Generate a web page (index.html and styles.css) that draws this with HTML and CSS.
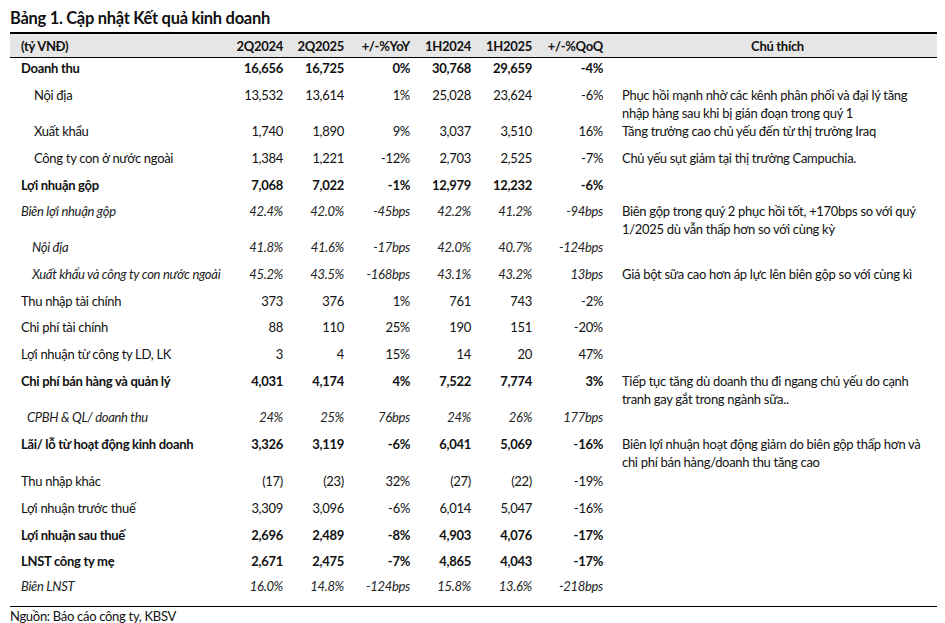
FILE: index.html
```html
<!DOCTYPE html>
<html lang="vi">
<head>
<meta charset="utf-8">
<title>Bảng 1. Cập nhật Kết quả kinh doanh</title>
<link rel="stylesheet" href="styles.css">
</head>
<body>
<div class="page">
  <h1 class="title">Bảng 1. Cập nhật Kết quả kinh doanh</h1>
  <div class="table">
    <div class="row head">
      <div class="c lbl">(tỷ VNĐ)</div>
      <div class="c n">2Q2024</div>
      <div class="c n">2Q2025</div>
      <div class="c n">+/-%YoY</div>
      <div class="c n">1H2024</div>
      <div class="c n">1H2025</div>
      <div class="c n">+/-%QoQ</div>
      <div class="c note center">Chú thích</div>
    </div>

    <div class="row h27 bold">
      <div class="c lbl">Doanh thu</div>
      <div class="c n">16,656</div><div class="c n">16,725</div><div class="c n">0%</div>
      <div class="c n">30,768</div><div class="c n">29,659</div><div class="c n">-4%</div>
      <div class="c note"></div>
    </div>
    <div class="row h36">
      <div class="c lbl ind">Nội địa</div>
      <div class="c n">13,532</div><div class="c n">13,614</div><div class="c n">1%</div>
      <div class="c n">25,028</div><div class="c n">23,624</div><div class="c n">-6%</div>
      <div class="c note">Phục hồi mạnh nhờ các kênh phân phối và đại lý tăng nhập hàng sau khi bị gián đoạn trong quý 1</div>
    </div>
    <div class="row h27">
      <div class="c lbl ind">Xuất khẩu</div>
      <div class="c n">1,740</div><div class="c n">1,890</div><div class="c n">9%</div>
      <div class="c n">3,037</div><div class="c n">3,510</div><div class="c n">16%</div>
      <div class="c note">Tăng trưởng cao chủ yếu đến từ thị trường Iraq</div>
    </div>
    <div class="row h27">
      <div class="c lbl ind">Công ty con ở nước ngoài</div>
      <div class="c n">1,384</div><div class="c n">1,221</div><div class="c n">-12%</div>
      <div class="c n">2,703</div><div class="c n">2,525</div><div class="c n">-7%</div>
      <div class="c note">Chủ yếu sụt giảm tại thị trường Campuchia.</div>
    </div>
    <div class="row h26 bold">
      <div class="c lbl">Lợi nhuận gộp</div>
      <div class="c n">7,068</div><div class="c n">7,022</div><div class="c n">-1%</div>
      <div class="c n">12,979</div><div class="c n">12,232</div><div class="c n">-6%</div>
      <div class="c note"></div>
    </div>
    <div class="row h36 ital">
      <div class="c lbl">Biên lợi nhuận gộp</div>
      <div class="c n">42.4%</div><div class="c n">42.0%</div><div class="c n">-45bps</div>
      <div class="c n">42.2%</div><div class="c n">41.2%</div><div class="c n">-94bps</div>
      <div class="c note">Biên gộp trong quý 2 phục hồi tốt, +170bps so với quý 1/2025 dù vẫn thấp hơn so với cùng kỳ</div>
    </div>
    <div class="row h27 ital">
      <div class="c lbl ind-i">Nội địa</div>
      <div class="c n">41.8%</div><div class="c n">41.6%</div><div class="c n">-17bps</div>
      <div class="c n">42.0%</div><div class="c n">40.7%</div><div class="c n">-124bps</div>
      <div class="c note"></div>
    </div>
    <div class="row h27 ital">
      <div class="c lbl ind-i">Xuất khẩu và công ty con nước ngoài</div>
      <div class="c n">45.2%</div><div class="c n">43.5%</div><div class="c n">-168bps</div>
      <div class="c n">43.1%</div><div class="c n">43.2%</div><div class="c n">13bps</div>
      <div class="c note">Giá bột sữa cao hơn áp lực lên biên gộp so với cùng kì</div>
    </div>
    <div class="row h26">
      <div class="c lbl">Thu nhập tài chính</div>
      <div class="c n">373</div><div class="c n">376</div><div class="c n">1%</div>
      <div class="c n">761</div><div class="c n">743</div><div class="c n">-2%</div>
      <div class="c note"></div>
    </div>
    <div class="row h27">
      <div class="c lbl">Chi phí tài chính</div>
      <div class="c n">88</div><div class="c n">110</div><div class="c n">25%</div>
      <div class="c n">190</div><div class="c n">151</div><div class="c n">-20%</div>
      <div class="c note"></div>
    </div>
    <div class="row h27">
      <div class="c lbl">Lợi nhuận từ công ty LD, LK</div>
      <div class="c n">3</div><div class="c n">4</div><div class="c n">15%</div>
      <div class="c n">14</div><div class="c n">20</div><div class="c n">47%</div>
      <div class="c note"></div>
    </div>
    <div class="row h36 bold">
      <div class="c lbl">Chi phí bán hàng và quản lý</div>
      <div class="c n">4,031</div><div class="c n">4,174</div><div class="c n">4%</div>
      <div class="c n">7,522</div><div class="c n">7,774</div><div class="c n">3%</div>
      <div class="c note">Tiếp tục tăng dù doanh thu đi ngang chủ yếu do cạnh tranh gay gắt trong ngành sữa..</div>
    </div>
    <div class="row h27 ital">
      <div class="c lbl ind-s">CPBH &amp; QL/ doanh thu</div>
      <div class="c n">24%</div><div class="c n">25%</div><div class="c n">76bps</div>
      <div class="c n">24%</div><div class="c n">26%</div><div class="c n">177bps</div>
      <div class="c note"></div>
    </div>
    <div class="row h37 bold">
      <div class="c lbl">Lãi/ lỗ từ hoạt động kinh doanh</div>
      <div class="c n">3,326</div><div class="c n">3,119</div><div class="c n">-6%</div>
      <div class="c n">6,041</div><div class="c n">5,069</div><div class="c n">-16%</div>
      <div class="c note">Biên lợi nhuận hoạt động giảm do biên gộp thấp hơn và chi phí bán hàng/doanh thu tăng cao</div>
    </div>
    <div class="row h27">
      <div class="c lbl">Thu nhập khác</div>
      <div class="c n">(17)</div><div class="c n">(23)</div><div class="c n">32%</div>
      <div class="c n">(27)</div><div class="c n">(22)</div><div class="c n">-19%</div>
      <div class="c note"></div>
    </div>
    <div class="row h27">
      <div class="c lbl">Lợi nhuận trước thuế</div>
      <div class="c n">3,309</div><div class="c n">3,096</div><div class="c n">-6%</div>
      <div class="c n">6,014</div><div class="c n">5,047</div><div class="c n">-16%</div>
      <div class="c note"></div>
    </div>
    <div class="row h26 bold">
      <div class="c lbl">Lợi nhuận sau thuế</div>
      <div class="c n">2,696</div><div class="c n">2,489</div><div class="c n">-8%</div>
      <div class="c n">4,903</div><div class="c n">4,076</div><div class="c n">-17%</div>
      <div class="c note"></div>
    </div>
    <div class="row h25 bold">
      <div class="c lbl">LNST công ty mẹ</div>
      <div class="c n">2,671</div><div class="c n">2,475</div><div class="c n">-7%</div>
      <div class="c n">4,865</div><div class="c n">4,043</div><div class="c n">-17%</div>
      <div class="c note"></div>
    </div>
    <div class="row last ital">
      <div class="c lbl">Biên LNST</div>
      <div class="c n">16.0%</div><div class="c n">14.8%</div><div class="c n">-124bps</div>
      <div class="c n">15.8%</div><div class="c n">13.6%</div><div class="c n">-218bps</div>
      <div class="c note"></div>
    </div>
  </div>
  <p class="source">Nguồn: Báo cáo công ty, KBSV</p>
</div>
</body>
</html>
```

FILE: styles.css
```css
* { box-sizing: border-box; }
html, body { margin: 0; padding: 0; background: #ffffff; }
body {
  font-family: Lato, "Noto Sans", sans-serif;
  color: #111111;
  font-size: 13px;
  letter-spacing: -0.3px;
}
.page {
  padding: 7px 8px 0 10px;
}
.title {
  margin: 0;
  font-size: 16.5px;
  font-weight: 700;
  line-height: 22px;
  height: 25px;
  color: #111;
}
.table {
  width: 927px;
  border-bottom: 1px solid #000;
}
.row {
  display: grid;
  grid-template-columns: 213px 60px 61px 66px 61px 61px 71px 1fr;
  align-items: start;
  line-height: 18px;
}
.row .c { padding-top: 1px; white-space: nowrap; }
.row .note { white-space: normal; padding-left: 19px; padding-right: 4px; }
.head {
  background: #e7e6e6;
  border-top: 2px solid #000;
  border-bottom: 1px solid #000;
  height: 26px;
  font-weight: 700;
  align-items: center;
}
.head .c { padding-top: 0; }
.lbl { padding-left: 11px; }
.n { text-align: right; }
.center { text-align: center; }
.bold .lbl, .bold .n { font-weight: 700; }
.ital .lbl, .ital .n { font-style: italic; color: #222; }
.ind { padding-left: 24px; }
.ind-i { padding-left: 22px; }
.ind-s { padding-left: 17px; }
.h25 { height: 25px; }
.h26 { height: 26px; }
.h27 { height: 27px; }
.h36 { height: 36px; }
.h37 { height: 37px; }
.last { height: 30px; }
.source {
  margin: 0;
  padding-top: 0;
  line-height: 18px;
  font-size: 13px;
}
```
